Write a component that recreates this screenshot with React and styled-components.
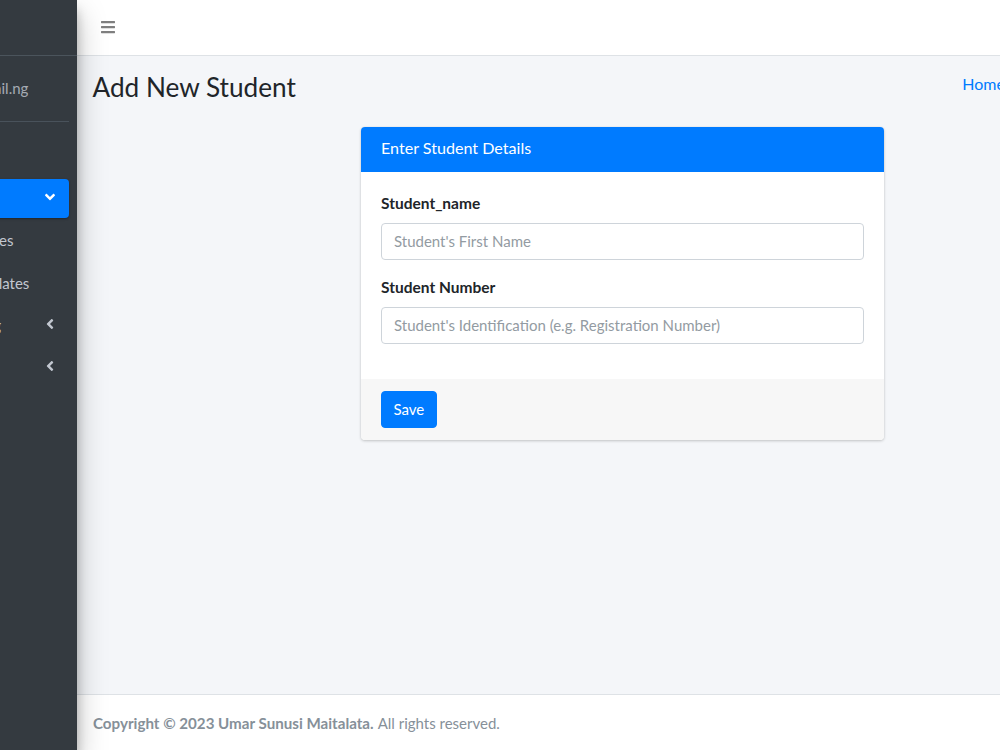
import React from 'react';
import styled, { createGlobalStyle } from 'styled-components';
import { FaAngleDown, FaAngleLeft, FaBars } from 'react-icons/fa';

const GlobalStyle = createGlobalStyle`
  html, body {
    margin: 0;
    height: 100%;
    overflow: hidden;
  }
  body {
    font-family: 'Lato', 'Liberation Sans', sans-serif;
    font-size: 15px;
    line-height: 1.5;
    color: #212529;
    background: #f4f6f9;
  }
  * { box-sizing: border-box; }
`;

const Page = styled.div`
  display: flex;
  height: 750px;
  width: 1341px;
  margin-left: -173px;
`;

const Sidebar = styled.aside`
  position: relative;
  z-index: 2;
  flex: 0 0 250px;
  background: #343a40;
  box-shadow: 0 14px 28px rgba(0, 0, 0, 0.25), 0 10px 10px rgba(0, 0, 0, 0.22);
`;

const Brand = styled.div`
  height: 56px;
  border-bottom: 1px solid #4b545c;
  padding: 14px 24px;
  color: rgba(255, 255, 255, 0.8);
  font-size: 20px;
`;

const UserPanel = styled.div`
  margin: 0 8px;
  height: 66px;
  border-bottom: 1px solid #4f5962;
  padding: 21px 0 0 94px;
  color: #c2c7d0;
  opacity: 0.8;
`;

const Nav = styled.nav`
  display: flex;
  flex-direction: column;
  gap: 3.5px;
  padding: 14px 8px 0;
`;

const NavLink = styled.a`
  display: flex;
  align-items: center;
  justify-content: space-between;
  height: 39px;
  padding: 0 11px 0 ${(p) => p.$indent || 40}px;
  border-radius: 4px;
  color: ${(p) => (p.$active ? '#fff' : '#c2c7d0')};
  background: ${(p) => (p.$active ? '#007bff' : 'transparent')};
  box-shadow: ${(p) => (p.$active ? '0 1px 3px rgba(0, 0, 0, 0.12), 0 1px 2px rgba(0, 0, 0, 0.24)' : 'none')};
  svg {
    font-size: 16px;
    transform: translateY(${(p) => (p.$active ? -1 : -2)}px);
  }
`;

const Main = styled.div`
  display: flex;
  flex-direction: column;
  flex: 0 0 1091px;
`;

const Topbar = styled.header`
  display: flex;
  align-items: center;
  height: 56px;
  padding: 0 23px 2px;
  background: #fff;
  border-bottom: 1px solid #dee2e6;
  color: rgba(0, 0, 0, 0.5);
  font-size: 16px;
`;

const Content = styled.main`
  flex: 1;
  padding: 0 8px;
`;

const ContentHeader = styled.div`
  display: flex;
  justify-content: space-between;
  align-items: flex-start;
  height: 71px;
  padding: 16px 7.5px 0;
`;

const Title = styled.h1`
  margin: 0;
  font-size: 26.2px;
  font-weight: 400;
  line-height: 1.2;
  color: #212529;
`;

const Breadcrumb = styled.div`
  display: flex;
  gap: 8px;
  font-size: 16px;
  color: #6c757d;
  a { color: #007bff; }
`;

const CardRow = styled.div`
  display: flex;
  justify-content: center;
`;

const Card = styled.section`
  width: 523px;
  border-radius: 4px;
  background: #fff;
  overflow: hidden;
  box-shadow: 0 0 1px rgba(0, 0, 0, 0.125), 0 1px 3px rgba(0, 0, 0, 0.2);
`;

const CardHeader = styled.div`
  height: 45px;
  padding: 0 20px 2px;
  display: flex;
  align-items: center;
  background: #007bff;
  color: #fff;
  font-size: 16.1px;
`;

const CardBody = styled.div`
  padding: 19px 20px 19px;
`;

const Group = styled.div`
  margin-bottom: 15px;
  &:last-child {
    margin-bottom: 16px;
  }
`;

const Label = styled.label`
  display: block;
  margin-bottom: 8px;
  font-weight: 700;
  font-size: 15.5px;
  line-height: 24px;
`;

const Input = styled.input`
  display: block;
  width: 100%;
  height: 37px;
  padding: 5px 12px 7px;
  font: inherit;
  color: #495057;
  border: 1px solid #ced4da;
  border-radius: 4px;
  background: #fff;
  &::placeholder {
    color: #939ba2;
    opacity: 1;
  }
`;

const CardFooter = styled.div`
  padding: 12px 20px;
  background: #f7f7f7;
`;

const SaveButton = styled.button`
  display: block;
  height: 37px;
  padding: 0 11.5px;
  font: inherit;
  color: #fff;
  background: #007bff;
  border: 1px solid #007bff;
  border-radius: 4px;
`;

const Footer = styled.footer`
  height: 56px;
  padding: 1px 16px 0;
  display: flex;
  align-items: center;
  gap: 4px;
  background: #fff;
  border-top: 1px solid #dee2e6;
  color: #869099;
  strong {
    font-weight: 700;
    font-size: 15.15px;
  }
`;

export default function App() {
  return (
    <>
      <GlobalStyle />
      <Page>
        <Sidebar>
          <Brand>Student Portal</Brand>
          <UserPanel>admin@mail.ng</UserPanel>
          <Nav>
            <NavLink>Dashboard</NavLink>
            <NavLink $active>
              Students
              <FaAngleDown />
            </NavLink>
            <NavLink $indent={69}>Manage Courses</NavLink>
            <NavLink $indent={72}>Manage Templates</NavLink>
            <NavLink $indent={46}>
              Student Reporting
              <FaAngleLeft />
            </NavLink>
            <NavLink>
              Settings
              <FaAngleLeft />
            </NavLink>
          </Nav>
        </Sidebar>
        <Main>
          <Topbar>
            <FaBars />
          </Topbar>
          <Content>
            <ContentHeader>
              <Title>Add New Student</Title>
              <Breadcrumb>
                <a>Home</a>
                <span>/</span>
                <span>Add New Student</span>
              </Breadcrumb>
            </ContentHeader>
            <CardRow>
              <Card>
                <CardHeader>Enter Student Details</CardHeader>
                <CardBody>
                  <Group>
                    <Label>Student_name</Label>
                    <Input placeholder="Student's First Name" />
                  </Group>
                  <Group>
                    <Label>Student Number</Label>
                    <Input placeholder="Student's Identification (e.g. Registration Number)" />
                  </Group>
                </CardBody>
                <CardFooter>
                  <SaveButton>Save</SaveButton>
                </CardFooter>
              </Card>
            </CardRow>
          </Content>
          <Footer>
            <strong>Copyright © 2023 Umar Sunusi Maitalata.</strong> All rights reserved.
          </Footer>
        </Main>
      </Page>
    </>
  );
}
